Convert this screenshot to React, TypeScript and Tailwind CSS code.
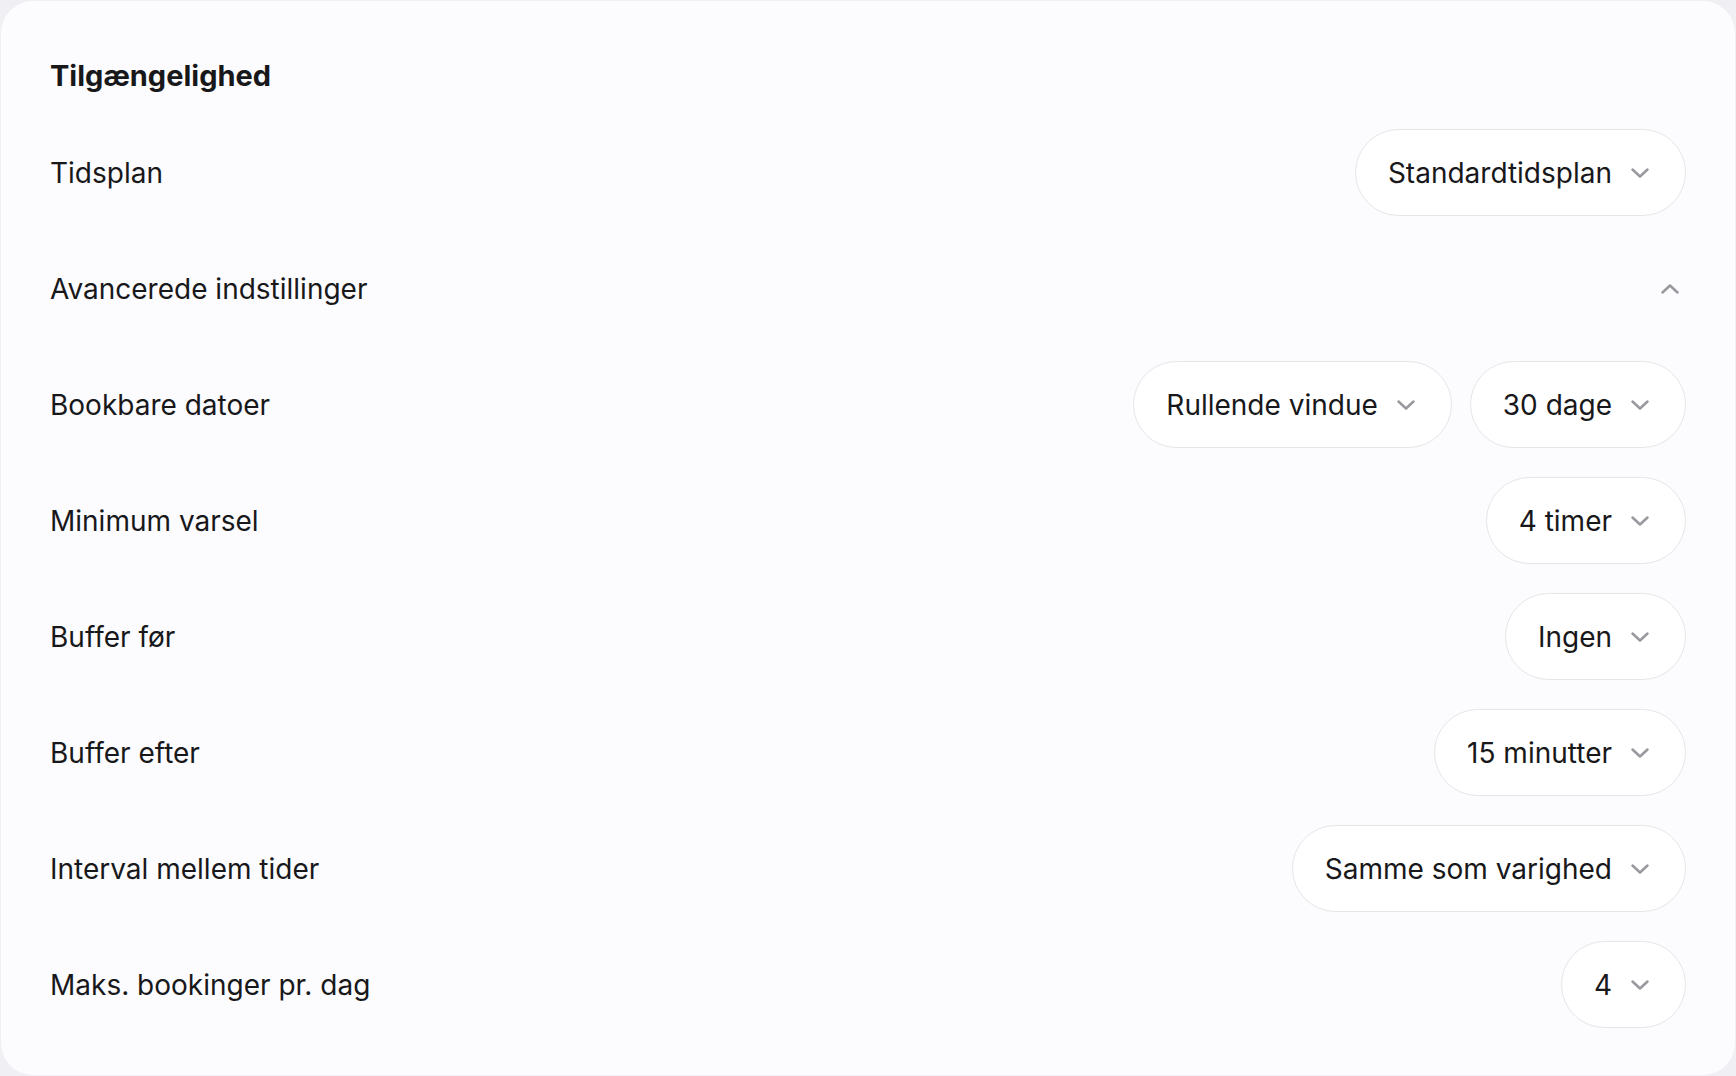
import React from 'react';

type Row = { label: string; values: string[] };

const rows: Row[] = [
  { label: 'Bookbare datoer', values: ['Rullende vindue', '30 dage'] },
  { label: 'Minimum varsel', values: ['4 timer'] },
  { label: 'Buffer før', values: ['Ingen'] },
  { label: 'Buffer efter', values: ['15 minutter'] },
  { label: 'Interval mellem tider', values: ['Samme som varighed'] },
  { label: 'Maks. bookinger pr. dag', values: ['4'] },
];

const Chevron: React.FC<{ up?: boolean }> = ({ up }) => (
  <svg width="18" height="10" viewBox="0 0 18 10" fill="none" className="shrink-0">
    <path
      d={up ? 'M1.5 8.5 L9 1.5 L16.5 8.5' : 'M1.5 1.5 L9 8.5 L16.5 1.5'}
      stroke="#98989e"
      strokeWidth="2.5"
      strokeLinecap="round"
      strokeLinejoin="round"
    />
  </svg>
);

const Pill: React.FC<{ value: string }> = ({ value }) => (
  <button className="h-[87px] flex items-center rounded-full border-[1.5px] border-[#e6e6ea] bg-white pl-[32px] pr-[36px] gap-[19px]">
    <span className="text-[28px] text-[#18181b] leading-none">{value}</span>
    <Chevron />
  </button>
);

export default function App() {
  return (
    <div className="min-h-screen bg-[#f0f0f4] p-px font-['Inter',sans-serif]">
      <div className="h-[1074px] rounded-[32px] bg-[#fcfcfe] px-[49px] pt-[56px] pb-[46px]">
        <h2 className="h-[36px] flex items-center text-[29px] font-bold text-[#18181b] leading-none">
          Tilgængelighed
        </h2>

        <div className="mt-[36px] flex flex-col gap-[29px]">
          <div className="h-[87px] flex items-center justify-between">
            <span className="text-[28px] text-[#18181b]">Tidsplan</span>
            <Pill value="Standardtidsplan" />
          </div>

          <div className="h-[87px] flex items-center justify-between">
            <span className="text-[28px] text-[#18181b]">Avancerede indstillinger</span>
            <button className="mr-[7px]">
              <Chevron up />
            </button>
          </div>

          {rows.map((row) => (
            <div key={row.label} className="h-[87px] flex items-center justify-between">
              <span className="text-[28px] text-[#18181b]">{row.label}</span>
              <div className="flex items-center gap-[18px]">
                {row.values.map((v) => (
                  <Pill key={v} value={v} />
                ))}
              </div>
            </div>
          ))}
        </div>
      </div>
    </div>
  );
}
